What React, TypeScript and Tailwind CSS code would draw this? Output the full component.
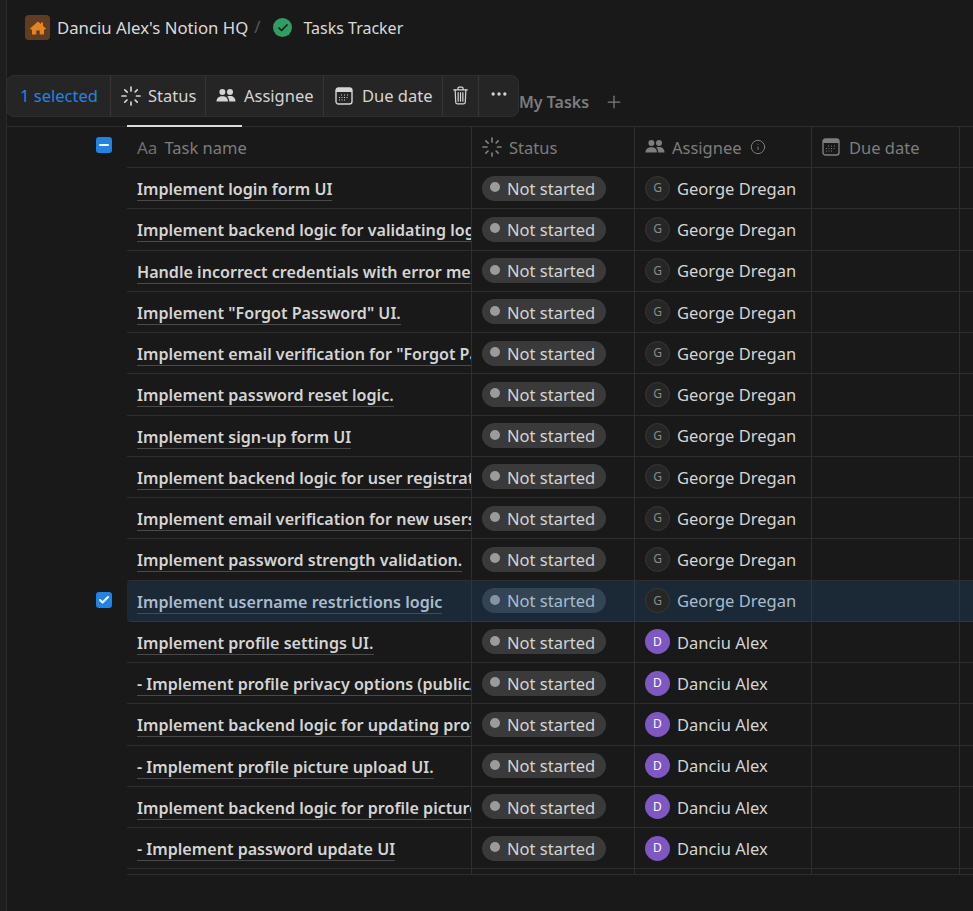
import { Fragment } from 'react';
import { Check, Ellipsis, Info, Plus } from 'lucide-react';

const george = 'George Dregan';
const danciu = 'Danciu Alex';

const tasks = [
  { name: 'Implement login form UI', who: george },
  { name: 'Implement backend logic for validating login credentials', who: george },
  { name: 'Handle incorrect credentials with error messages', who: george },
  { name: 'Implement "Forgot Password" UI.', who: george },
  { name: 'Implement email verification for "Forgot Password"', who: george },
  { name: 'Implement password reset logic.', who: george },
  { name: 'Implement sign-up form UI', who: george },
  { name: 'Implement backend logic for user registration', who: george },
  { name: 'Implement email verification for new users', who: george },
  { name: 'Implement password strength validation.', who: george },
  { name: 'Implement username restrictions logic', who: george, selected: true },
  { name: 'Implement profile settings UI.', who: danciu },
  { name: '- Implement profile privacy options (public/private)', who: danciu },
  { name: 'Implement backend logic for updating profile', who: danciu },
  { name: '- Implement profile picture upload UI.', who: danciu },
  { name: 'Implement backend logic for profile picture', who: danciu },
  { name: '- Implement password update UI', who: danciu },
];

function StatusIcon({ className }: { className?: string }) {
  return (
    <svg className={className} viewBox="0 0 20 20" fill="none" stroke="currentColor" strokeWidth="1.7" strokeLinecap="round">
      <path d="M10 1v4M10 16v3M1 10h4M15.5 10H19M3.8 3.8l2.4 2.4M14.2 14.2l2 2M3.8 16.2l2.2-2.2M14.2 5.8l2-2" />
    </svg>
  );
}

function PeopleIcon({ className }: { className?: string }) {
  return (
    <svg className={className} viewBox="0 0 20 20" fill="currentColor">
      <circle cx="6.4" cy="6" r="3" />
      <circle cx="14" cy="6" r="3" />
      <path d="M0.5 15.5c0-3.4 2.6-5.2 5.9-5.2s5.6 1.8 5.6 5.2H0.5zM13.2 15.5c0-2-.6-3.800-2-5 1-.3 2-.4 3-.4 3 0 5.300 1.900 5.300 5.400h-6.300z" />
    </svg>
  );
}

function CalendarIcon({ className }: { className?: string }) {
  return (
    <svg className={className} viewBox="0 0 18 18" fill="none">
      <rect x="1" y="1" width="16" height="16" rx="2.5" stroke="currentColor" strokeWidth="1.4" />
      <path d="M1 2.500a1.500 1.500 0 0 1 1.500-1.500h13a1.500 1.500 0 0 1 1.500 1.500V5H1z" fill="currentColor" />
      <path d="M6 8h1M9 8h1M12 8h1M4 10.500h1M6.500 10.500h1M9 10.500h1M11.500 10.500h1M4 13h1M6.500 13h1M9 13h1" stroke="currentColor" strokeWidth="1.200" />
    </svg>
  );
}

function TrashIcon({ className }: { className?: string }) {
  return (
    <svg className={className} viewBox="0 0 16 20" fill="none" stroke="currentColor" strokeWidth="1.300" strokeLinecap="round" strokeLinejoin="round">
      <path d="M.8 4h14.400M5.300 4V2.300c0-.7.5-1.200 1.200-1.200h3c.7 0 1.200.5 1.200 1.200V4" />
      <path d="M2.300 4l.6 13.300c0 .9.7 1.600 1.600 1.600h7c.9 0 1.600-.7 1.600-1.600L13.700 4" />
      <path d="M5.500 7v9M8 7v9M10.500 7v9" />
    </svg>
  );
}

function Avatar({ who }: { who: string }) {
  if (who === danciu) {
    return (
      <span className="w-[25px] h-[25px] rounded-full bg-[#7e57c2] text-white text-[12px] flex items-center justify-center shrink-0">D</span>
    );
  }
  return (
    <span className="w-[25px] h-[25px] rounded-full bg-[#262626] border border-[#373737] text-[#8a8a8a] text-[12px] flex items-center justify-center shrink-0">G</span>
  );
}

function HeaderCell({ children, last }: { children?: React.ReactNode; last?: boolean }) {
  return (
    <div className={`h-[41px] flex items-center pl-2.5 pt-0.5 text-[#7d7d7d] border-b border-[#2e2e2e] whitespace-nowrap overflow-hidden ${last ? '' : 'border-r'}`}>
      {children}
    </div>
  );
}

export default function App() {
  return (
    <div className="relative h-[911px] w-[973px] overflow-hidden bg-[#191919] text-[16.5px] text-[#d4d4d4] font-['Noto_Sans','Open_Sans',sans-serif]">
      <div className="absolute left-0 top-0 bottom-0 w-[7px] bg-[#1e1e1e] border-r border-[#2b2b2b]" />

      {/* breadcrumb */}
      <div className="h-[55px] pl-[25px] flex items-center text-[#d9d9d9] whitespace-nowrap">
        <span className="w-[25px] h-[25px] rounded bg-[#5f3d22] flex items-center justify-center mr-[7px]">
          <svg className="w-4 h-4 text-[#e8821e]" viewBox="0 0 16 16" fill="currentColor">
            <path d="M8 1.500l3 2.600V2.500h2v3.400l3 2.600-.8.900H14V14.500H9.700V10.500H6.300v4H2V9.400H.8L0 8.500z" />
          </svg>
        </span>
        <span className="text-[16.750px]">Danciu Alex's Notion HQ</span>
        <span className="text-[#5a5a5a] ml-1.5 mr-[13px]">/</span>
        <span className="w-[19px] h-[19px] rounded-full bg-[#2f9e62] flex items-center justify-center mr-[11px]">
          <Check className="w-3 h-3 text-[#191919]" strokeWidth={3.5} />
        </span>
        <span className="text-[16px]">Tasks Tracker</span>
      </div>

      {/* tab bar */}
      <div className="h-[72px] pl-[127px] flex items-end border-b border-[#2e2e2e]">
        <div className="w-[115px] h-0.5 bg-[#d9d9d9] -mb-px" />
        <div className="ml-[277px] mb-3 flex items-center gap-[15px] text-[#7d7d7d]">
          <span className="font-semibold text-[16px]">My Tasks</span>
          <Plus className="w-5 h-5" strokeWidth={1.5} />
        </div>
      </div>

      {/* table */}
      <div className="relative ml-[127px]">
        <div className="grid grid-cols-[345px_163px_177px_148px_1fr] border-b border-[#2e2e2e]">
          <HeaderCell>
            <span className="text-[#6f6f6f] text-[17px] mr-[7px]">Aa</span>
            Task name
          </HeaderCell>
          <HeaderCell>
            <StatusIcon className="w-5 h-5 mr-[7px] -mt-0.5" />
            Status
          </HeaderCell>
          <HeaderCell>
            <PeopleIcon className="w-5 h-5 mr-[7px] -mt-0.5" />
            Assignee
            <Info className="w-4 h-4 ml-2 -mt-0.5" strokeWidth={1.5} />
          </HeaderCell>
          <HeaderCell>
            <CalendarIcon className="w-[18px] h-[18px] mr-[9px] -mt-0.5" />
            Due date
          </HeaderCell>
          <HeaderCell last />

          {tasks.map((task) => {
            const bg = task.selected ? 'bg-[#1b2936] border-[#26384a] text-[#a9bccd]' : 'border-[#2e2e2e]';
            return (
              <Fragment key={task.name}>
                <div className={`h-[41.25px] pl-2.5 pt-1 flex items-center border-b border-r overflow-hidden whitespace-nowrap ${bg} ${task.selected ? 'rounded-l' : ''}`}>
                  <span className="font-semibold text-[16.100px] leading-[21px] border-b border-[#4a4a4a]">{task.name}</span>
                </div>
                <div className={`h-[41.25px] pl-2.5 flex items-center border-b border-r ${bg}`}>
                  <span className={`h-[25px] w-[124px] rounded-full flex items-center gap-[7px] pl-2 whitespace-nowrap ${task.selected ? 'bg-[#334454]' : 'bg-[#3a3a3a]'}`}>
                    <span className={`w-2.5 h-2.5 rounded-full -mt-0.5 ${task.selected ? 'bg-[#8494a3]' : 'bg-[#9b9b9b]'}`} />
                    <span className="pt-0.5">Not started</span>
                  </span>
                </div>
                <div className={`h-[41.25px] pl-2.5 flex items-center gap-[7px] border-b border-r whitespace-nowrap ${bg}`}>
                  <Avatar who={task.who} />
                  <span className="pt-0.5">{task.who}</span>
                </div>
                <div className={`h-[41.25px] border-b border-r ${bg}`} />
                <div className={`h-[41.25px] border-b ${bg}`} />
              </Fragment>
            );
          })}

          {/* short tail under the last row */}
          <div className="h-[5px] border-r border-[#2e2e2e]" />
          <div className="h-[5px] border-r border-[#2e2e2e]" />
          <div className="h-[5px] border-r border-[#2e2e2e]" />
          <div className="h-[5px] border-r border-[#2e2e2e]" />
          <div className="h-[5px]" />
        </div>

        {/* row checkboxes */}
        <span className="absolute -left-[31px] top-[10px] w-4 h-4 rounded-[3px] bg-[#2383e2] flex items-center justify-center">
          <span className="w-2.5 h-0.5 bg-white rounded-sm" />
        </span>
        <span className="absolute -left-[31px] top-[465px] w-4 h-4 rounded-[3px] bg-[#2383e2] flex items-center justify-center">
          <Check className="w-3 h-3 text-white" strokeWidth={4} />
        </span>
      </div>

      {/* floating selection toolbar */}
      <div className="absolute left-[6px] top-[75px] h-[42px] w-[513px] rounded-lg bg-[#252525] border border-[#2f2f2f] flex items-stretch text-[#d4d4d4] whitespace-nowrap">
        <div className="w-[104px] flex items-center pl-[13px] border-r border-[#363636] text-[#2383e2]">1 selected</div>
        <div className="w-[95px] flex items-center gap-[7px] pl-2.5 border-r border-[#363636]">
          <StatusIcon className="w-5 h-5" />
          Status
        </div>
        <div className="w-[118px] flex items-center gap-2 pl-2.5 border-r border-[#363636]">
          <PeopleIcon className="w-5 h-5" />
          Assignee
        </div>
        <div className="w-[119px] flex items-center gap-[9px] pl-[11px] border-r border-[#363636]">
          <CalendarIcon className="w-[18px] h-[18px]" />
          Due date
        </div>
        <div className="w-[36px] flex items-center justify-center border-r border-[#363636]">
          <TrashIcon className="w-[15px] h-[19px] -mt-0.5" />
        </div>
        <div className="flex-1 flex items-center justify-center">
          <Ellipsis className="w-5 h-5 -mt-1" />
        </div>
      </div>
    </div>
  );
}
